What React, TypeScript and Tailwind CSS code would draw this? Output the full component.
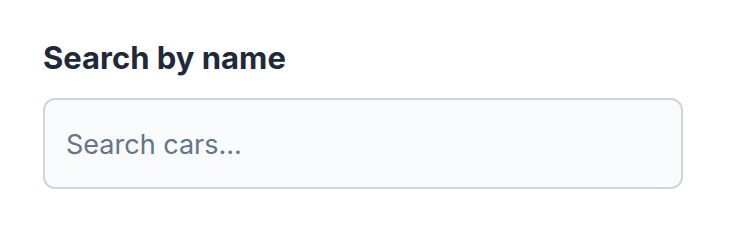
export default function App() {
  return (
    <div className="min-h-screen bg-white" style={{ fontFamily: 'Inter, "Noto Sans", sans-serif' }}>
      <div className="pl-[43px] pr-[65px] pt-[37px]">
        <label className="block text-[31px] leading-[42px] font-bold text-[#1e293b] mb-[19px]">Search by name</label>
        <input
          type="text"
          placeholder="Search cars..."
          className="w-[640px] h-[91px] px-[21px] pt-[2px] rounded-[12px] border-2 border-[#d1d5db] bg-[#f8fafc] text-[27px] text-[#1f2937] placeholder:text-[#64748b] outline-none"
        />
      </div>
    </div>
  )
}
